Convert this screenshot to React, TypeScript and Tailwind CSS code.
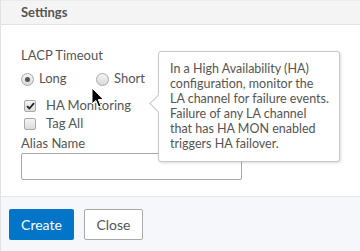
import React from 'react'

const font = { fontFamily: 'Lato, "Open Sans", sans-serif' }

const tipLines = [
  'In a High Availability (HA)',
  'configuration, monitor the',
  'LA channel for failure events.',
  'Failure of any LA channel',
  'that has HA MON enabled',
  'triggers HA failover.',
]

function Radio({ checked, label, className = '' }: { checked?: boolean; label: string; className?: string }) {
  return (
    <label className={`flex items-center gap-[5px] ${className}`}>
      <span className="w-[13px] h-[13px] rounded-full border border-[#a9a9a9] bg-gradient-to-b from-[#f4f4f4] to-[#d9d9d9] flex items-center justify-center">
        {checked && <span className="w-[5px] h-[5px] rounded-full bg-[#555]" />}
      </span>
      <span className="text-[13px] text-[#555]">{label}</span>
    </label>
  )
}

function Checkbox({ checked, label }: { checked?: boolean; label: string }) {
  return (
    <label className="flex items-center gap-[10px] pl-[3px]">
      <span className="w-[12px] h-[12px] rounded-[2px] border border-[#a9a9a9] bg-gradient-to-b from-[#f4f4f4] to-[#dcdcdc] flex items-center justify-center">
        {checked && (
          <svg width="9" height="8" viewBox="0 0 9 8">
            <path d="M1 4.2 L3.4 6.5 L8 1.2" fill="none" stroke="#222" strokeWidth="1.8" />
          </svg>
        )}
      </span>
      <span className="text-[13px] text-[#555]">{label}</span>
    </label>
  )
}

export default function App() {
  return (
    <div className="relative w-[360px] h-[251px] bg-white border-l border-[#e2e2e2] overflow-hidden" style={font}>
      {/* Header */}
      <div className="h-[25px] bg-[#f4f4f4] border-b border-[#e3e3e3] border-t border-t-[#ececec] flex items-center pl-[20px]">
        <span className="text-[13px] font-bold text-[#555]">Settings</span>
      </div>

      {/* Body */}
      <div className="h-[172px] pl-[20px] pt-[21px] border-b border-[#e3e6ea]">
        <div className="text-[13px] text-[#555] leading-[18px]">LACP Timeout</div>
        <div className="flex items-center mt-[6px] h-[18px]">
          <Radio checked label="Long" className="w-[75px]" />
          <Radio label="Short" />
        </div>
        <div className="mt-[9px] flex flex-col gap-[1px]">
          <div className="h-[17px] flex items-center"><Checkbox checked label="HA Monitoring" /></div>
          <div className="h-[17px] flex items-center"><Checkbox label="Tag All" /></div>
        </div>
        <div className="mt-[2px] text-[13px] text-[#555] leading-[18px]">Alias Name</div>
        <input className="mt-[1px] w-[221px] h-[27px] border border-[#a8a8a8] rounded-[2px] bg-white outline-none" />
      </div>

      {/* Footer */}
      <div className="h-[54px] bg-[#f5f7fa] flex items-start pt-[12px] pl-[8px] gap-[10px]">
        <button className="w-[65px] h-[31px] rounded-[2px] bg-[#0275c8] text-white text-[14px]">Create</button>
        <button className="w-[59px] h-[31px] rounded-[2px] bg-white border border-[#a8a8a8] text-[#555] text-[14px]">Close</button>
      </div>

      {/* Tooltip */}
      <div className="absolute left-[157px] top-[51px] w-[182px] h-[111px] bg-white border border-[#c8c8c8] rounded-[3px] shadow-[1px_1px_3px_rgba(0,0,0,0.15)] pl-[11px] pt-[9px]">
        <div className="absolute left-[-7px] top-[45px] w-[13px] h-[13px] bg-white border-l border-b border-[#c8c8c8] rotate-45" />
        <div className="relative text-[12.5px] leading-[15px] text-[#555] whitespace-nowrap">
          {tipLines.map((l) => (
            <div key={l}>{l}</div>
          ))}
        </div>
      </div>

      {/* Mouse cursor */}
      <svg className="absolute left-[90px] top-[87px]" width="14" height="22" viewBox="0 0 14 22">
        <path d="M1 1 L1 17 L4.8 13.4 L7.6 20 L10 19 L7.3 12.6 L12.5 12.6 Z" fill="#000" stroke="#fff" strokeWidth="1" strokeLinejoin="round" />
      </svg>
    </div>
  )
}
